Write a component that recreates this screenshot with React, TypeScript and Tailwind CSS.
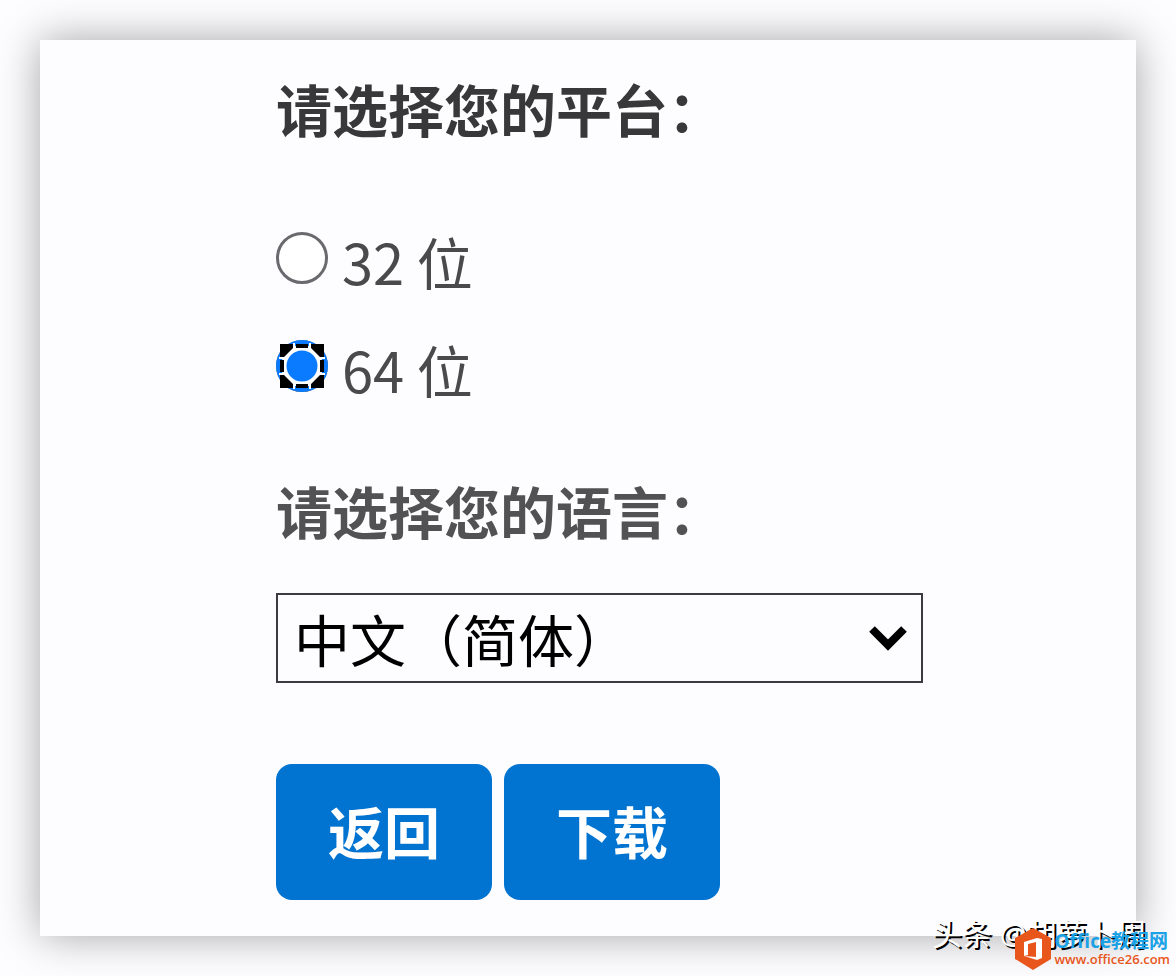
import { useState } from "react";

type Platform = "32" | "64";

const platforms: { value: Platform; label: string }[] = [
  { value: "32", label: "32 位" },
  { value: "64", label: "64 位" },
];

function FocusMark() {
  return (
    <svg
      viewBox="0 0 52 52"
      className="pointer-events-none absolute inset-0 size-full"
      aria-hidden="true"
    >
      <circle cx="26" cy="26" r="26" fill="#0a7bff" />
      <circle cx="26" cy="26" r="21" fill="#fff" />
      <path
        d="M4 17V4h13v4L8 17zM35 4h13v13h-4L35 8zM48 35v13H35v-4l9-9zM17 48H4V35h4l9 9z"
        fill="#000"
      />
      <path d="M20 6h12M20 46h12M6 20v12M46 20v12" stroke="#000" strokeWidth="4" />
      <path
        d="M18 3v6M34 3v6M18 43v6M34 43v6M3 18h6M3 34h6M43 18h6M43 34h6"
        stroke="#fff"
        strokeWidth="2"
      />
      <circle cx="26" cy="26" r="15.5" fill="#0a7bff" />
    </svg>
  );
}

function PlatformOption({
  value,
  label,
  checked,
  onSelect,
}: {
  value: Platform;
  label: string;
  checked: boolean;
  onSelect: (value: Platform) => void;
}) {
  return (
    <label className="flex h-[108px] items-center gap-3.5 text-[56px] leading-none text-[#4a4a4d]">
      <span className="relative size-[52px] shrink-0">
        <input
          type="radio"
          name="platform"
          value={value}
          checked={checked}
          onChange={() => onSelect(value)}
          className="block size-full appearance-none rounded-full border-3 border-[#6a6a6e] bg-white outline-none"
        />
        {checked && <FocusMark />}
      </span>
      <span className="pt-1.5 font-['Noto_Sans_CJK_SC',sans-serif]">{label}</span>
    </label>
  );
}

function OfficeLogo() {
  return (
    <svg viewBox="0 0 36 42" className="h-[42px] w-9 shrink-0" aria-hidden="true">
      <path d="M18 0l18 10v21L18 42 0 31V10z" fill="#e8561c" />
      <path d="M9 14l13-4 5 1v19l-5 2-13-4 12 1V14l-8 2v11l-4 1z" fill="#fff" />
    </svg>
  );
}

function Watermark() {
  return (
    <div className="pointer-events-none absolute right-0 bottom-0 h-16 w-[244px]">
      <p className="absolute top-0.5 left-0 text-[30px] leading-10 whitespace-nowrap text-white [text-shadow:2px_2px_0_#000]">
        头条 @胡萝卜周
      </p>
      <div className="absolute right-1.5 bottom-1.5 flex items-center gap-1">
        <OfficeLogo />
        <div className="whitespace-nowrap">
          <p className="text-[19px] leading-5 font-bold text-[#1ba1e6]">Office教程网</p>
          <p className="text-[13px] leading-4 font-semibold text-[#e8561c]">www.office26.com</p>
        </div>
      </div>
    </div>
  );
}

export default function App() {
  const [platform, setPlatform] = useState<Platform>("64");

  return (
    <div className="relative min-h-screen bg-[#fdfcfe] p-10 font-['Open_Sans','Noto_Sans_CJK_SC',sans-serif]">
      <main className="bg-[#fdfcfe] pt-[34px] pr-10 pb-9 pl-59 shadow-[0_0_40px_rgba(0,0,0,0.35)]">
        <fieldset>
          <legend className="text-[56px] leading-[72px] font-bold text-[#38383a]">
            请选择您的平台：
          </legend>
          <div className="pt-[58px]">
            {platforms.map((p) => (
              <PlatformOption
                key={p.value}
                value={p.value}
                label={p.label}
                checked={platform === p.value}
                onSelect={setPlatform}
              />
            ))}
          </div>
        </fieldset>

        <label
          htmlFor="language"
          className="mt-14 block text-[56px] leading-[72px] font-bold text-[#525255]"
        >
          请选择您的语言：
        </label>
        <div className="relative mt-[45px] max-w-[647px]">
          <select
            id="language"
            className="block h-[90px] w-full appearance-none border-2 border-[#3c3c40] bg-[#fdfcfe] px-4 pt-1 text-[56px] leading-[80px] text-black"
          >
            <option>中文（简体）</option>
          </select>
          <svg
            viewBox="0 0 38 26"
            className="pointer-events-none absolute top-8 right-4 h-[26px] w-[38px]"
            aria-hidden="true"
          >
            <path d="M3 4l16 16L35 4" fill="none" stroke="#000" strokeWidth="8" />
          </svg>
        </div>

        <div className="mt-[81px] flex flex-wrap gap-3 text-[56px] leading-none font-bold text-white">
          <button type="button" className="h-34 w-54 rounded-2xl bg-[#0173d0]">
            返回
          </button>
          <button type="button" className="h-34 w-54 rounded-2xl bg-[#0173d0]">
            下载
          </button>
        </div>
      </main>
      <Watermark />
    </div>
  );
}
